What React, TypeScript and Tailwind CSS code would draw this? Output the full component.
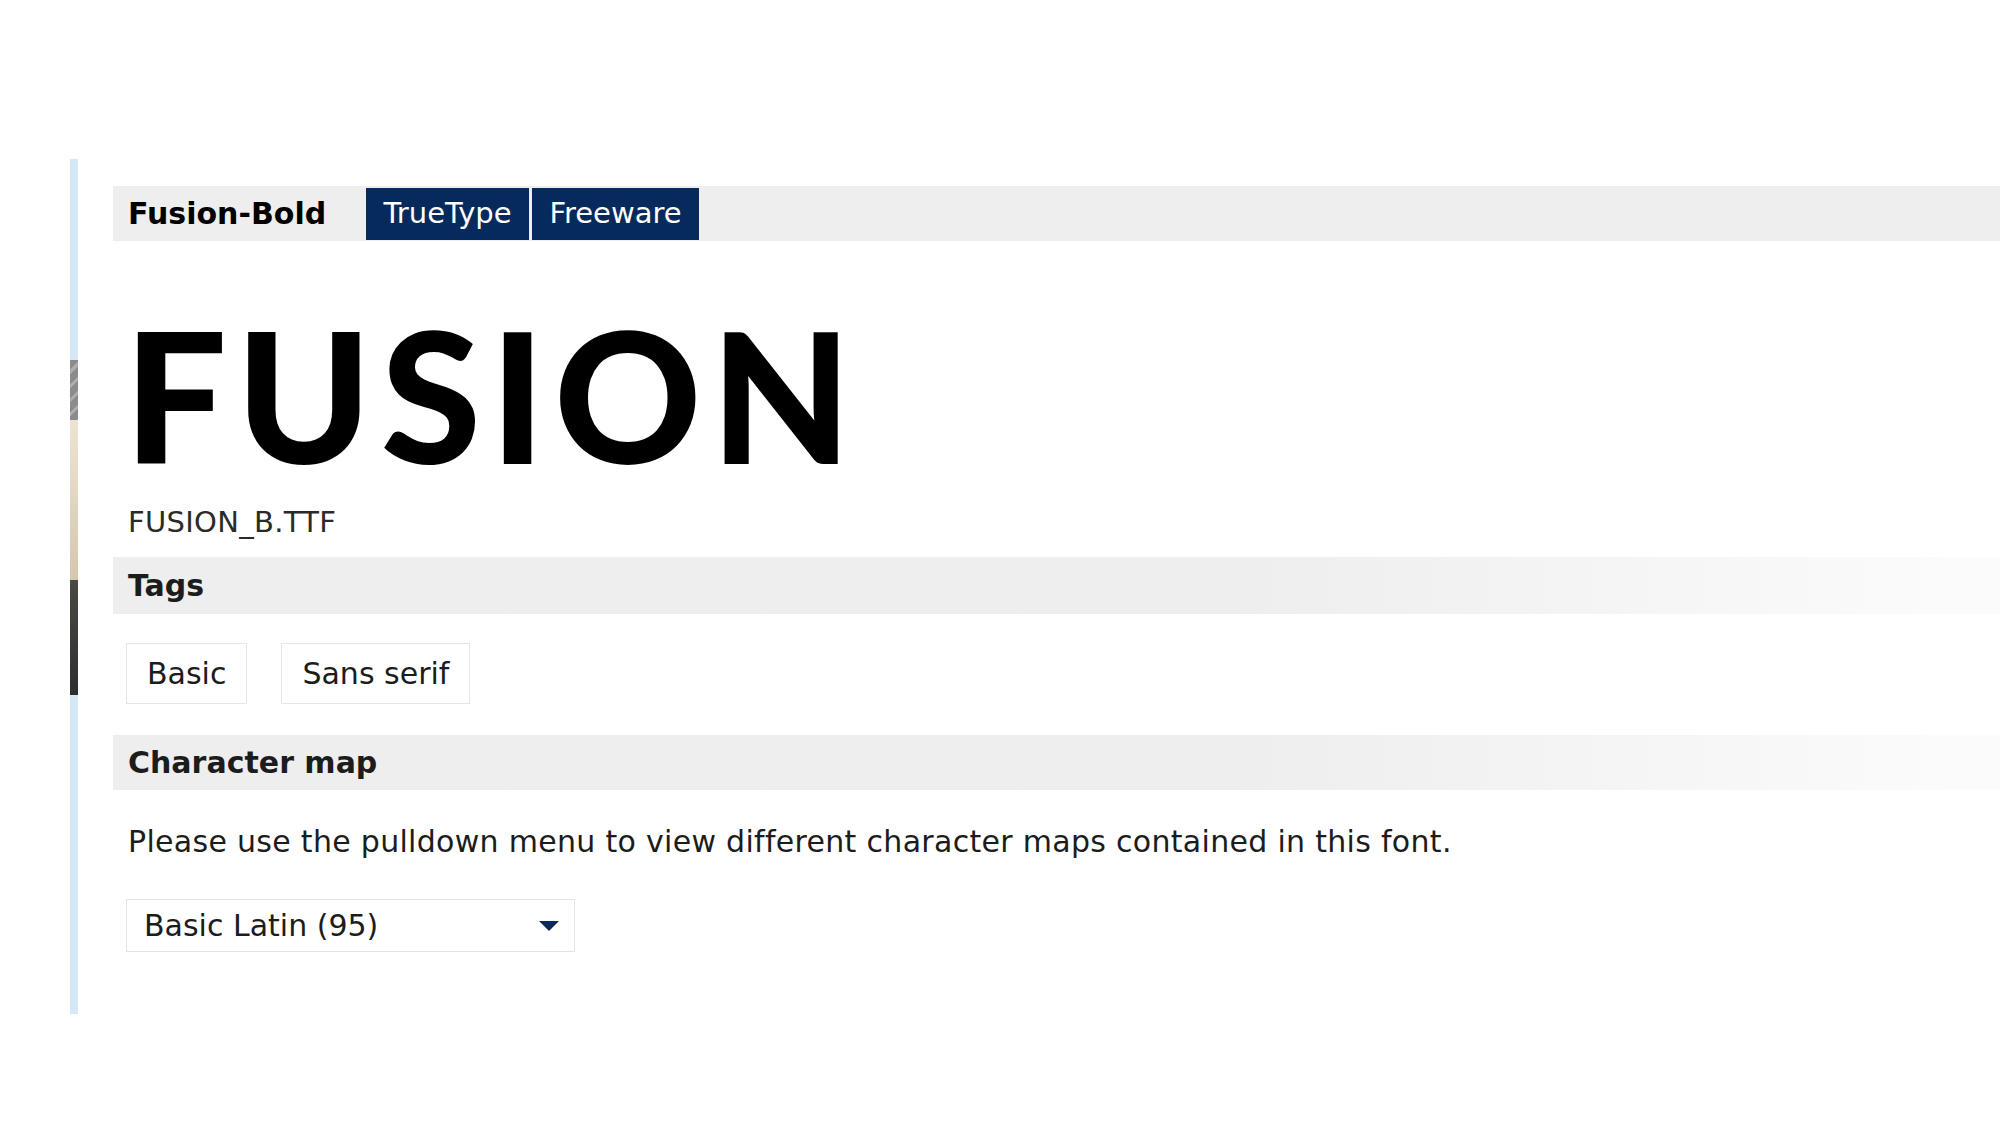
import React from "react";

export default function App() {
  return (
    <div
      className="w-[2000px] h-[1125px] bg-white flex items-start pt-[159px] pl-[70px] overflow-hidden text-[#1c1c1c]"
      style={{ fontFamily: '"DejaVu Sans", Verdana, sans-serif' }}
    >
      {/* left strip */}
      <div className="w-[8px] h-[855px] flex flex-col shrink-0">
        <div className="h-[201px] bg-[#d6e8f8]" />
        <div className="h-[60px] bg-[#8c8c8c] bg-[repeating-linear-gradient(135deg,#8c8c8c_0px,#8c8c8c_7px,#adadad_7px,#adadad_10px)]" />
        <div className="h-[160px] bg-linear-to-b from-[#ece4d4] to-[#d6c7ae]" />
        <div className="h-[115px] bg-linear-to-b from-[#4a4a44] to-[#2e2e2e]" />
        <div className="flex-1 bg-[#d6e8f8]" />
      </div>

      {/* main */}
      <div className="flex-1 ml-[35px] pt-[27px] flex flex-col">
        {/* header */}
        <div className="h-[55px] bg-[#eeeeee] flex items-center">
          <div className="w-[253px] pl-[15px] text-[30px] font-bold text-black">Fusion-Bold</div>
          <div className="flex items-center gap-[3px]">
            <div className="w-[163px] h-[52px] bg-[#062a5c] text-white text-[29px] flex items-center justify-center">
              TrueType
            </div>
            <div className="w-[167px] h-[52px] bg-[#062a5c] text-white text-[29px] flex items-center justify-center">
              Freeware
            </div>
          </div>
        </div>

        {/* big sample */}
        <div
          className="mt-[62px] pl-[11px] text-[182px] leading-none font-black text-black tracking-[9px]"
          style={{ fontFamily: 'Lato, "Open Sans", sans-serif' }}
        >
          FUSION
        </div>
        <div className="mt-[20px] pl-[15px] text-[29px] leading-[34px] text-[#2a2a2a] tracking-[0.3px]">FUSION_B.TTF</div>

        {/* tags */}
        <div className="mt-[18px] h-[57px] flex items-center pl-[15px] bg-linear-to-r from-[#eeeeee] from-60% to-[#fbfbfb] to-97%">
          <span className="text-[30px] font-bold">Tags</span>
        </div>
        <div className="mt-[29px] ml-[13px] flex gap-[34px]">
          <div className="h-[61px] px-[20px] border border-[#e6e6e6] flex items-center text-[30px]">Basic</div>
          <div className="h-[61px] px-[20px] border border-[#e6e6e6] flex items-center text-[30px]">Sans serif</div>
        </div>

        {/* character map */}
        <div className="mt-[31px] h-[55px] flex items-center pl-[15px] bg-linear-to-r from-[#eeeeee] from-60% to-[#fbfbfb] to-97%">
          <span className="text-[30px] font-bold">Character map</span>
        </div>
        <p className="mt-[34px] pl-[15px] text-[30px] leading-[36px] tracking-[0.3px]">
          Please use the pulldown menu to view different character maps contained in this font.
        </p>
        <div className="mt-[39px] ml-[13px] w-[449px] h-[53px] border border-[#e4e4e4] flex items-center justify-between pl-[17px] pr-[14px]">
          <span className="text-[30px]">Basic Latin (95)</span>
          <svg width="22" height="12" viewBox="0 0 22 12">
            <polygon points="1,1 21,1 11,11" fill="#0b2a55" />
          </svg>
        </div>
      </div>
    </div>
  );
}
